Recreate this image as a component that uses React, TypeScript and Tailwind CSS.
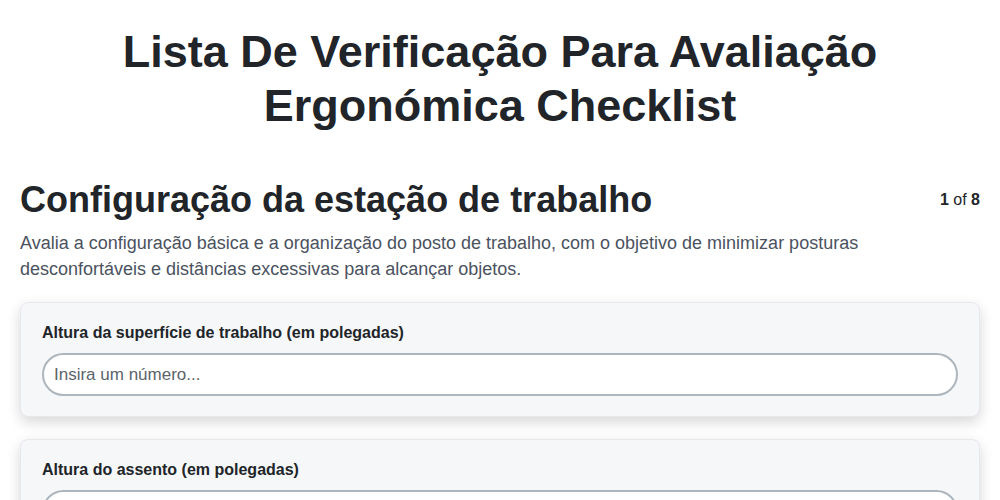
const fields = [
  { label: "Altura da superfície de trabalho (em polegadas)" },
  { label: "Altura do assento (em polegadas)" },
  { label: "Distância do monitor aos olhos (em polegadas)" },
];

export default function App() {
  return (
    <div className="min-h-screen bg-white text-[#212529] font-['Liberation_Sans',Arial,sans-serif]">
      <div className="px-5">
        <h1 className="text-center text-[45px] leading-[54px] font-bold pt-[25px] px-20">
          Lista De Verificação Para Avaliação Ergonómica Checklist
        </h1>

        <div className="mt-[45px] flex items-start justify-between">
          <h2 className="text-4xl font-bold leading-[44px]">Configuração da estação de trabalho</h2>
          <div className="text-[16px] mt-[10px]">
            <span className="font-bold">1</span> of <span className="font-bold">8</span>
          </div>
        </div>
        <p className="mt-[8px] text-[18px] leading-[26px] text-[#4b5260]">
          Avalia a configuração básica e a organização do posto de trabalho, com o objetivo de minimizar posturas
          desconfortáveis e distâncias excessivas para alcançar objetos.
        </p>

        <div className="mt-[20px] flex flex-col gap-[22px] pb-10">
          {fields.map((f, i) => (
            <div
              key={i}
              className="bg-[#f6f7f9] border border-[#e6e8eb] rounded-lg shadow-[0_5px_14px_rgba(0,0,0,0.16)] px-[21px] pt-[20px] pb-[20px]"
            >
              <label className="block text-[16px] font-bold leading-[20px] mb-[10px]">{f.label}</label>
              <input
                type="text"
                placeholder="Insira um número..."
                className="w-full h-[43px] rounded-full border-2 border-[#adb5bd] bg-white px-[10px] text-[17px] placeholder:text-[#5c636a] outline-none"
              />
            </div>
          ))}
        </div>
      </div>
    </div>
  );
}
